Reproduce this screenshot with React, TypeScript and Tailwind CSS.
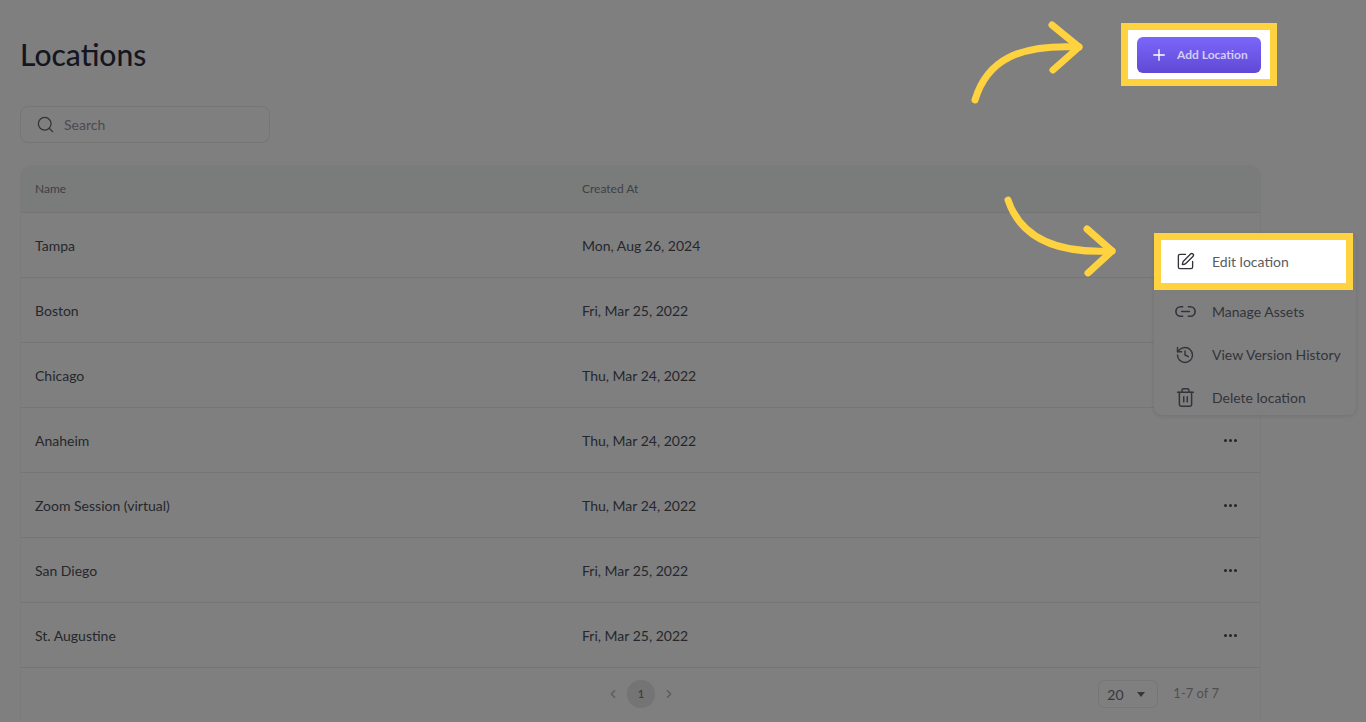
import { ChevronLeft, ChevronRight, History, Link2, Plus, Search, SquarePen, Trash2 } from "lucide-react";

const rows = [
  ["Tampa", "Mon, Aug 26, 2024"],
  ["Boston", "Fri, Mar 25, 2022"],
  ["Chicago", "Thu, Mar 24, 2022"],
  ["Anaheim", "Thu, Mar 24, 2022"],
  ["Zoom Session (virtual)", "Thu, Mar 24, 2022"],
  ["San Diego", "Fri, Mar 25, 2022"],
  ["St. Augustine", "Fri, Mar 25, 2022"],
];

function Dots() {
  return (
    <div className="flex gap-[2px]">
      <span className="size-[3px] rounded-full bg-[#24252b]" />
      <span className="size-[3px] rounded-full bg-[#24252b]" />
      <span className="size-[3px] rounded-full bg-[#24252b]" />
    </div>
  );
}

function Arrow({ className, d, head }: { className: string; d: string; head: string }) {
  return (
    <svg className={className} viewBox="0 0 120 90" fill="none" stroke="#ffd23f" strokeWidth="7" strokeLinecap="round" strokeLinejoin="round">
      <path d={d} />
      <path d={head} />
    </svg>
  );
}

function MenuRow({ icon, label }: { icon: React.ReactNode; label: string }) {
  return (
    <div className="flex h-[43px] items-center pl-[21px] text-[14px] text-[#33343b]">
      <span className="flex w-[37px]">{icon}</span>
      {label}
    </div>
  );
}

export default function App() {
  return (
    <div className="relative h-[722px] w-[1366px] overflow-hidden bg-[#7f7f7f] pl-5 font-['Lato',sans-serif]">
      <h1 className="pt-[33px] text-[30px] leading-[42px] font-medium text-[#14161f]">Locations</h1>

      <div className="mt-[31px] flex h-[37px] w-[250px] items-center rounded-lg border border-[#767676] pl-[15px] text-[14px] text-[#4a4b50]">
        <Search size={19} strokeWidth={1.6} className="mr-[9px] text-[#333438]" />
        Search
      </div>

      <div className="mt-[22px] w-[1241px] rounded-t-xl border border-b-0 border-[#7b7b7b]">
        <div className="grid h-[47px] grid-cols-[547px_1fr] items-center rounded-t-xl border-b border-[#757575] bg-[#7a7c7b] pl-[14px] text-[12px] text-[#3f4045]">
          <span>Name</span>
          <span>Created At</span>
        </div>
        {rows.map(([name, date]) => (
          <div key={name} className="grid h-[65px] grid-cols-[547px_1fr_auto] items-center border-b border-[#757575] pr-[23px] pl-[14px] text-[14px] text-[#26272d]">
            <span>{name}</span>
            <span>{date}</span>
            <Dots />
          </div>
        ))}
        <div className="flex h-[52px] items-center pr-[41px] pl-[585px]">
          <ChevronLeft size={14} className="text-[#5a5a5e]" />
          <span className="mx-[7px] flex size-[28px] items-center justify-center rounded-full bg-[#747474] text-[12px] text-[#36373c]">1</span>
          <ChevronRight size={14} className="text-[#5a5a5e]" />
          <div className="ml-auto flex h-[28px] w-[60px] items-center justify-between rounded-md border border-[#767676] pr-[12px] pl-[8px] text-[14px] text-[#36373c]">
            20
            <span className="border-x-[4px] border-t-[5px] border-x-transparent border-t-[#36373c]" />
          </div>
          <span className="ml-[15px] text-[13px] text-[#4e4f54]">1-7 of 7</span>
        </div>
      </div>

      <div className="absolute top-[23px] left-[1121px] flex h-[63px] w-[156px] items-center justify-center border-[7px] border-[#ffd23f] bg-white">
        <button className="flex h-[36px] w-[124px] items-center rounded-md bg-gradient-to-b from-[#7b66fb] to-[#6049d5] pl-[13px] text-[12px] font-bold text-[#d3ccf8]">
          <Plus size={18} strokeWidth={1.8} className="mr-[9px] text-white" />
          Add Location
        </button>
      </div>

      <Arrow
        className="absolute top-[18px] left-[965px] h-[90px] w-[120px]"
        d="M10 82 C22 42 54 26 114 29"
        head="M87 7 L114 29 L88 52"
      />
      <Arrow
        className="absolute top-[192px] left-[1000px] h-[90px] w-[120px]"
        d="M8 8 C20 44 54 62 112 59"
        head="M87 37 L112 59 L88 81"
      />

      <div className="absolute top-[233px] left-[1154px] h-[182px] w-[202px] rounded-lg bg-[#7f7f7f] shadow-[0_1px_4px_rgba(0,0,0,0.12)]">
        <div className="flex h-[57px] w-[199px] items-center border-[7px] border-[#ffd23f] bg-white pl-[15px] text-[14px] text-[#5a5b61]">
          <SquarePen size={19} strokeWidth={1.7} className="mr-[17px] text-[#33343b]" />
          Edit location
        </div>
        <MenuRow icon={<Link2 size={23} strokeWidth={1.7} className="-ml-[1px]" />} label="Manage Assets" />
        <MenuRow icon={<History size={20} strokeWidth={1.7} />} label="View Version History" />
        <MenuRow icon={<Trash2 size={21} strokeWidth={1.7} />} label="Delete location" />
      </div>
    </div>
  );
}
